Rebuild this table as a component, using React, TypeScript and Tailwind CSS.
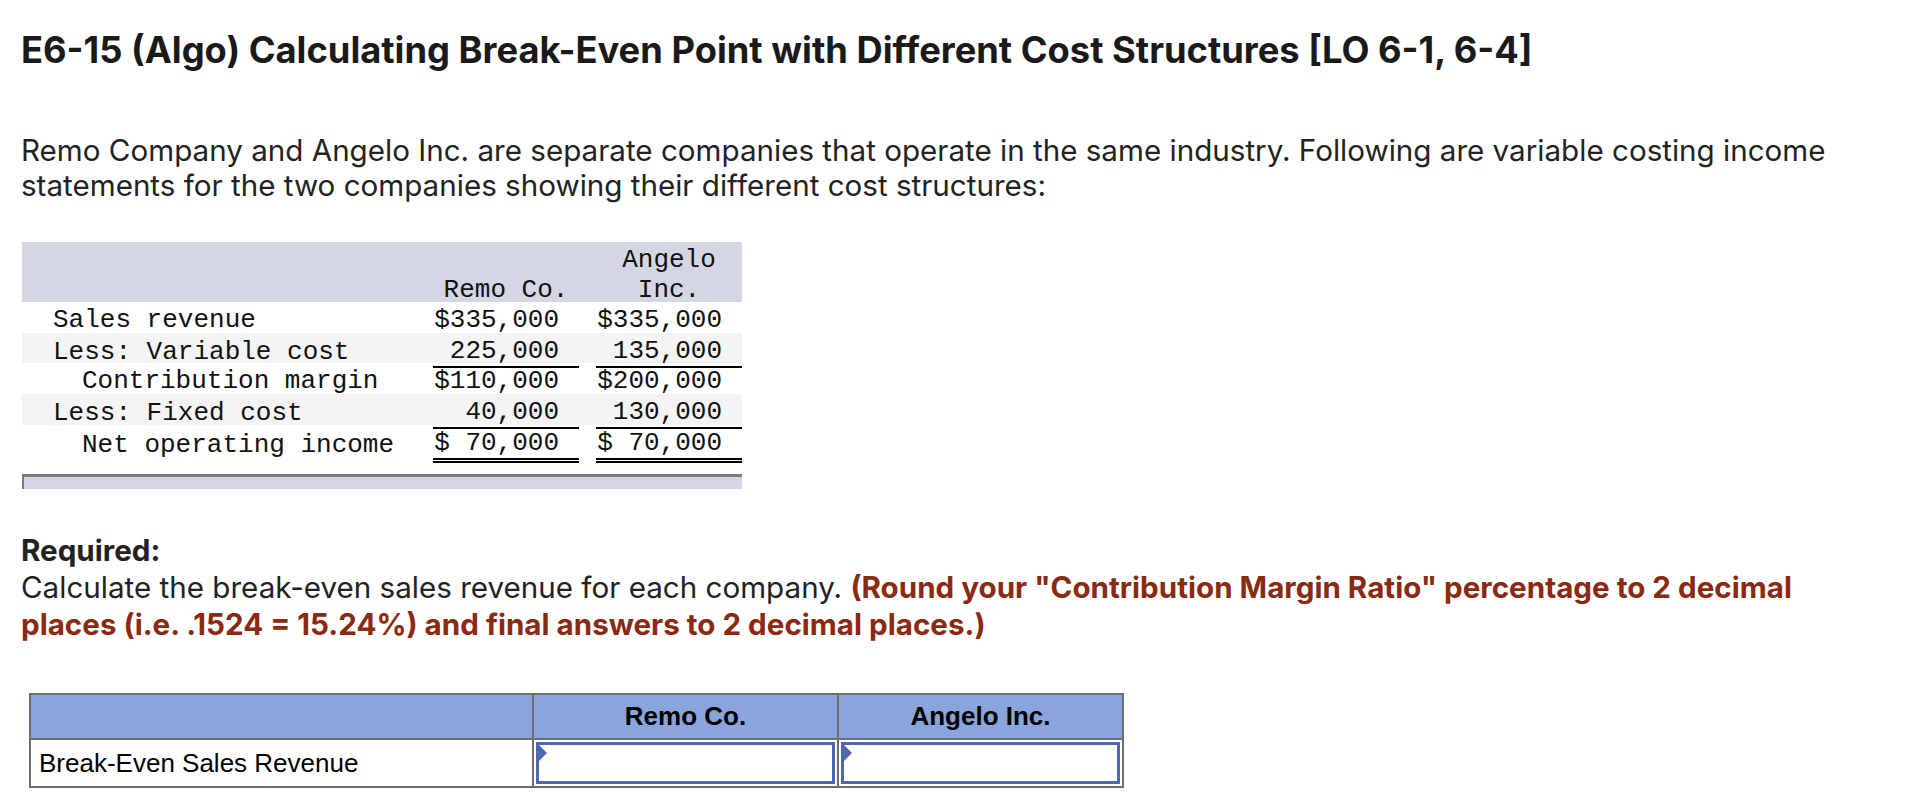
import React from "react";

type Row = {
  label: string;
  indent?: boolean;
  a: string;
  b: string;
  stripe?: boolean;
  line?: "single" | "double";
};

const rows: Row[] = [
  { label: "Sales revenue", a: "$335,000", b: "$335,000" },
  { label: "Less: Variable cost", a: "225,000", b: "135,000", stripe: true, line: "single" },
  { label: "Contribution margin", indent: true, a: "$110,000", b: "$200,000" },
  { label: "Less: Fixed cost", a: "40,000", b: "130,000", stripe: true, line: "single" },
  { label: "Net operating income", indent: true, a: "$ 70,000", b: "$ 70,000", line: "double" },
];

function MoneyCell({ value, line }: { value: string; line?: "single" | "double" }) {
  const border =
    line === "single"
      ? "border-b-2 border-black"
      : line === "double"
      ? "border-b-[5px] border-double border-black"
      : "";
  return (
    <div className={`flex items-center justify-end pr-[20px] pt-[3px] whitespace-pre ${border}`}>{value}</div>
  );
}

function InputCell() {
  return (
    <td className="border-2 border-[#6e6e6e] p-[2px] bg-white">
      <div className="relative h-[42px] border-[3px] border-[#4e68ad] bg-white">
        <div className="absolute left-0 top-0 h-0 w-0 border-y-[8px] border-l-[8px] border-y-transparent border-l-[#4e68ad]" />
      </div>
    </td>
  );
}

export default function App() {
  return (
    <div className="min-h-screen bg-white pl-[21px] pt-[28px] text-[#1f1f1f] [font-family:Inter,'Noto_Sans',sans-serif]">
      <h1 className="whitespace-nowrap text-[36.3px] font-bold leading-[44px] text-[#1a1a1a]">
        E6-15 (Algo) Calculating Break-Even Point with Different Cost Structures [LO 6-1, 6-4]
      </h1>

      <p className="mt-[61px] whitespace-nowrap text-[29.6px] leading-[35px] text-[#222]">
        Remo Company and Angelo Inc. are separate companies that operate in the same industry. Following are variable costing income
        <br />
        statements for the two companies showing their different cost structures:
      </p>

      <div className="mt-[39px] ml-[1px] w-[720px] text-[26px] text-[#111] [font-family:'Liberation_Mono','Courier_New',monospace]">
        <div className="grid h-[60px] grid-cols-[411px_146px_17px_146px] bg-[#d4d7e3] pt-[3px] leading-[30px]">
          <div />
          <div className="flex flex-col items-center justify-end">
            <span>Remo Co.</span>
          </div>
          <div />
          <div className="flex flex-col items-center justify-end">
            <span>Angelo</span>
            <span>Inc.</span>
          </div>
        </div>
        {rows.map((r) => (
          <div
            key={r.label}
            className={`grid h-[30.7px] grid-cols-[411px_146px_17px_146px] leading-[30px] ${r.stripe ? "bg-[#f4f4f4]" : "bg-white"}`}
          >
            <div className={`flex items-center whitespace-pre pt-[3px] ${r.indent ? "pl-[60px]" : "pl-[31px]"}`}>{r.label}</div>
            <MoneyCell value={r.a} line={r.line} />
            <div />
            <MoneyCell value={r.b} line={r.line} />
          </div>
        ))}
        <div className="mt-[19px] h-[15px] border-l-2 border-t-[3px] border-[#7b7b7b] bg-[#d4d7e3]" />
      </div>

      <div className="mt-[43px] text-[29.6px] leading-[37px] text-[#222]">
        <div className="font-bold">Required:</div>
        <div className="whitespace-nowrap">
          Calculate the break-even sales revenue for each company.{" "}
          <span className="font-bold text-[#8b2a12]">
            (Round your "Contribution Margin Ratio" percentage to 2 decimal
            <br />
            places (i.e. .1524 = 15.24%) and final answers to 2 decimal places.)
          </span>
        </div>
      </div>

      <table className="mt-[50px] ml-[8px] border-collapse text-[26px] text-black [font-family:'Liberation_Sans',Arial,sans-serif]">
        <thead>
          <tr className="h-[45px] bg-[#8aa5db]">
            <th className="w-[503px] border-2 border-[#6e6e6e]" />
            <th className="w-[305px] border-2 border-[#6e6e6e] text-center font-bold">Remo Co.</th>
            <th className="w-[285px] border-2 border-[#6e6e6e] text-center font-bold">Angelo Inc.</th>
          </tr>
        </thead>
        <tbody>
          <tr className="h-[48px]">
            <td className="border-2 border-[#6e6e6e] bg-white pl-[8px] text-left">Break-Even Sales Revenue</td>
            <InputCell />
            <InputCell />
          </tr>
        </tbody>
      </table>
    </div>
  );
}
